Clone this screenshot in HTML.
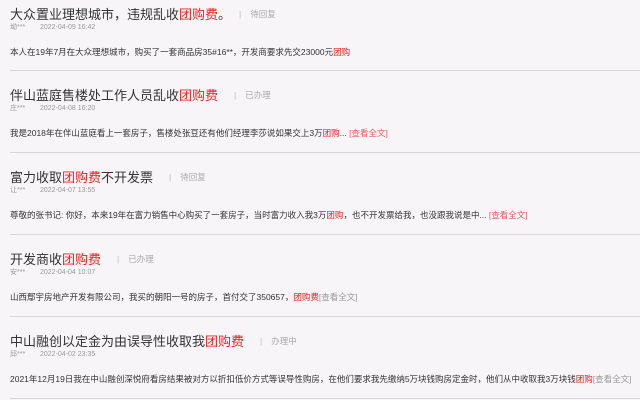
<!DOCTYPE html>
<html><head><meta charset="utf-8"><style>
body{margin:0;width:640px;height:400px;overflow:hidden;background:#f7f5f8;font-family:"Liberation Sans","Noto Sans CJK SC",sans-serif;position:relative}
.it{position:absolute;left:0;width:640px;height:82px}
.ln{position:absolute;left:10px;right:0;height:1px;background:#d8d6d9}
.t{position:absolute;left:10px;font-size:13px;color:#333;white-space:nowrap;line-height:16px}
.r{color:#f02020}
.s{color:#aaa;font-size:8.5px;margin-left:16px;vertical-align:2px}
.s b{font-weight:normal;margin-right:9px;color:#bbb}
.m{position:absolute;left:10px;font-size:7px;color:#999;white-space:nowrap;line-height:8px}
.m span{position:absolute;left:30px}
.b{position:absolute;left:10px;font-size:8.5px;color:#333;white-space:nowrap;line-height:10px}
.v{color:#999}
.vr{color:#e05a5a}
</style></head><body>
<div class="it" style="top:-11px">
<div class="t" style="top:17px">大众置业理想城市，违规乱收<span class="r">团购费</span>。<span class="s" style="margin-left:8px"><b>|</b>待回复</span></div>
<div class="m" style="top:35px">坳***<span>2022-04-09 16:42</span></div>
<div class="b" style="top:58px">本人在19年7月在大众理想城市，购买了一套商品房35#16**，开发商要求先交23000元<span class="r">团购</span></div>
</div>
<div class="ln" style="top:70px"></div>
<div class="it" style="top:70px">
<div class="t" style="top:17px">伴山蓝庭售楼处工作人员乱收<span class="r">团购费</span><span class="s"><b>|</b>已办理</span></div>
<div class="m" style="top:35px">庄***<span>2022-04-08 16:20</span></div>
<div class="b" style="top:58px">我是2018年在伴山蓝庭看上一套房子，售楼处张豆还有他们经理李莎说如果交上3万<span class="r">团购</span>... <span class="vr">[查看全文]</span></div>
</div>
<div class="ln" style="top:152px"></div>
<div class="it" style="top:152px">
<div class="t" style="top:17px">富力收取<span class="r">团购费</span>不开发票<span class="s"><b>|</b>待回复</span></div>
<div class="m" style="top:35px">让***<span>2022-04-07 13:55</span></div>
<div class="b" style="top:58px">尊敬的张书记: 你好，本来19年在富力销售中心购买了一套房子，当时富力收入我3万<span class="r">团购</span>，也不开发票给我，也没跟我说是中... <span class="vr">[查看全文]</span></div>
</div>
<div class="ln" style="top:234px"></div>
<div class="it" style="top:234px">
<div class="t" style="top:17px">开发商收<span class="r">团购费</span><span class="s"><b>|</b>已办理</span></div>
<div class="m" style="top:35px">安***<span>2022-04-04 10:07</span></div>
<div class="b" style="top:58px">山西鄢宇房地产开发有限公司，我买的朝阳一号的房子，首付交了350657，<span class="r">团购费</span><span class="v">[查看全文]</span></div>
</div>
<div class="ln" style="top:316px"></div>
<div class="it" style="top:316px">
<div class="t" style="top:17px">中山融创以定金为由误导性收取我<span class="r">团购费</span><span class="s"><b>|</b>办理中</span></div>
<div class="m" style="top:35px">邱***<span>2022-04-02 23:35</span></div>
<div class="b" style="top:58px">2021年12月19日我在中山融创深悦府看房结果被对方以折扣低价方式等误导性购房，在他们要求我先缴纳5万块钱购房定金时，他们从中收取我3万块钱<span class="r">团购</span><span class="v">[查看全文]</span></div>
</div>
<div class="ln" style="top:398px"></div>
</body></html>
